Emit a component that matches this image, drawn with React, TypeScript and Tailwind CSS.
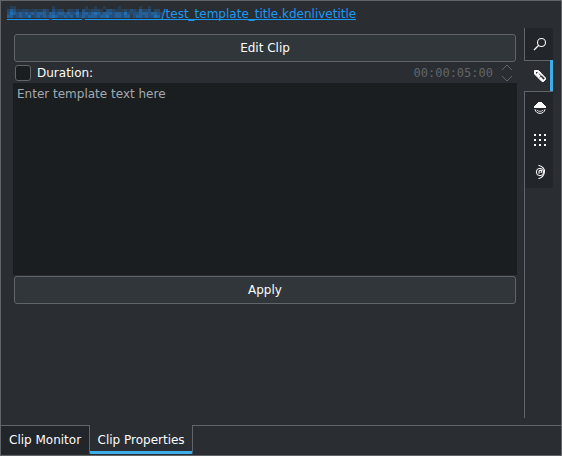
import React from "react";

// Brightness levels of the blocks that hide the private part of the path.
const MASK = [
  "0110000000000001000000000010010010000100000010010000",
  "2431122112113203122022130311222103321112132142230220",
  "3543434343444244344343352443454344434435323344434432",
  "4423433523434345433434243434443445334434413443433541",
  "0000000000000010000000000100000000000000000000000000",
];
const SHADES = ["none", "#293d50", "#264663", "#235080", "#245f98", "#226fb1"];

function HiddenPath() {
  return (
    <svg width="156" height="14" viewBox="0 0 156 14" shapeRendering="crispEdges" className="block shrink-0">
      {MASK.map((row, y) =>
        row.split("").map((c, x) => (
          <rect key={`${x}-${y}`} x={x * 3} y={y * 3} width="3" height="3" fill={SHADES[Number(c)]} />
        )),
      )}
    </svg>
  );
}

function SearchIcon() {
  return (
    <svg width="16" height="16" viewBox="0 0 16 16" fill="none" stroke="#fcfcfc" className="block">
      <circle cx="9.5" cy="6.5" r="4" strokeWidth="1.1" />
      <path d="M6.5 9.5 2 14" strokeWidth="1.3" />
    </svg>
  );
}

function TagIcon() {
  return (
    <svg width="16" height="16" viewBox="0 0 16 16" className="block">
      <path d="M2.5 2.5h4l7 7.5v1.5l-2 2H10L2.5 6z" fill="#fcfcfc" stroke="#fcfcfc" strokeWidth="1" strokeLinejoin="round" />
      <path d="M4 4h2L4 6z" fill="#2a2e32" />
      <path d="M7 5.6 9.2 8 7.8 9.4" fill="none" stroke="#2a2e32" strokeWidth=".9" />
      <path d="M9.2 8l2.9 3.1" stroke="#2a2e32" strokeWidth="1.6" />
    </svg>
  );
}

function EffectIcon() {
  return (
    <svg width="16" height="16" viewBox="0 0 16 16" className="block">
      <path d="M6 2h4v1h1v1h1v1h1v1h1v2H2V6h1V5h1V4h1V3h1z" fill="#fcfcfc" />
      <path d="M3 9.3c.8 5.4 9.2 5.4 10 0" fill="none" stroke="#fcfcfc" strokeWidth="1" />
      <path d="M4.8 10c1.2 1.8 5.2 1.8 6.4 0" fill="none" stroke="#fcfcfc" strokeWidth="1" opacity=".75" />
    </svg>
  );
}

function GridIcon() {
  return (
    <svg width="16" height="16" viewBox="0 0 16 16" shapeRendering="crispEdges" fill="#fcfcfc" className="block">
      {[2, 7, 12].map((y) => [2, 7, 12].map((x) => <rect key={`${x}-${y}`} x={x} y={y} width="2" height="2" />))}
    </svg>
  );
}

function AnalysisIcon() {
  return (
    <svg width="16" height="16" viewBox="0 0 16 16" fill="none" stroke="#fcfcfc" className="block">
      <circle cx="8" cy="8" r="3.7" strokeWidth="1" />
      <path d="M7 9.8V7.4C7 6.8 7.6 6.4 8.2 6.4h1.5v1.8H8.4" strokeWidth="1.1" />
      <path d="M6.5 1.3C10.5 2.4 12.7 5 12.4 8c-.2 3-2 5.4-5.9 6.7" strokeWidth="1.1" />
    </svg>
  );
}

function SideTab({ active = false, className = "h-8", children }: { active?: boolean; className?: string; children: React.ReactNode }) {
  return (
    <div
      className={`flex w-[29px] items-center border-l pl-[7px] ${
        active ? "border-l-transparent border-r-[3px] border-r-[#3daee9]" : "border-l-[#616569] bg-[#222529]"
      } ${className}`}
    >
      {children}
    </div>
  );
}

function PushButton({ children }: { children: React.ReactNode }) {
  return (
    <button className="ml-px flex h-7 w-[502px] items-center justify-center rounded-[3px] border border-[#616569] bg-[#31363b] pb-px">
      {children}
    </button>
  );
}

export default function App() {
  return (
    <div className="flex h-[456px] w-[562px] flex-col overflow-hidden border border-[#616569] bg-[#2a2e32] font-['DejaVu_Sans',sans-serif] text-[12px] leading-4 text-[#fcfcfc]">
      <div className="ml-1.5 mt-[5px] flex h-[14px] w-[349px] border-b border-[#1d99f3] text-[#1d99f3]">
        <HiddenPath />
        <span className="-ml-[1.5px] whitespace-nowrap">/test_template_title.kdenlivetitle</span>
      </div>

      <div className="mt-[8px] flex h-[391px]">
        <div className="ml-3 w-[504px] pt-[6px]">
          <PushButton>Edit Clip</PushButton>
          <div className="flex h-[21px] items-center pl-[2px]">
            <span className="size-4 rounded-[3px] border border-[#616569] bg-[#1b1e20]" />
            <span className="pl-[6px]">Duration:</span>
            <span className="ml-auto font-['DejaVu_Sans_Mono',monospace] text-[#616569]">00:00:05:00</span>
            <svg width="12" height="18" viewBox="0 0 12 18" fill="none" stroke="#616569" className="ml-[8px] mr-1">
              <path d="M1 6l5-5 5 5M1 12l5 5 5-5" />
            </svg>
          </div>
          <div className="h-[192px] bg-[#1b1e20] pl-1 pt-[3px] text-[#a1a9b1]">Enter template text here</div>
          <div className="pt-px">
            <PushButton>Apply</PushButton>
          </div>
        </div>

        <div className="ml-[7px] w-[29px]">
          <SideTab className="h-[33px] rounded-tr-[3px] border-b border-b-[#616569]">
            <SearchIcon />
          </SideTab>
          <SideTab active className="-mt-px h-[31px]">
            <TagIcon />
          </SideTab>
          <SideTab className="h-[33px] border-t border-t-[#616569]">
            <EffectIcon />
          </SideTab>
          <SideTab>
            <GridIcon />
          </SideTab>
          <SideTab className="h-8 rounded-br-[3px]">
            <AnalysisIcon />
          </SideTab>
          <div className="h-[230px] border-l border-[#616569]" />
        </div>
      </div>

      <div className="mt-[6px] flex h-[30px]">
        <div className="h-[29px] w-[88px] border-t border-[#616569] bg-[#222529] pl-2 pt-[6px]">Clip Monitor</div>
        <div className="h-[29px] w-[104px] rounded-b-[2px] border-x border-b-[3px] border-x-[#616569] border-b-[#3daee9] pl-[7.5px] pt-[7px]">
          <span className="whitespace-nowrap">Clip Properties</span>
        </div>
        <div className="flex-1 border-t border-[#616569]" />
      </div>
    </div>
  );
}
